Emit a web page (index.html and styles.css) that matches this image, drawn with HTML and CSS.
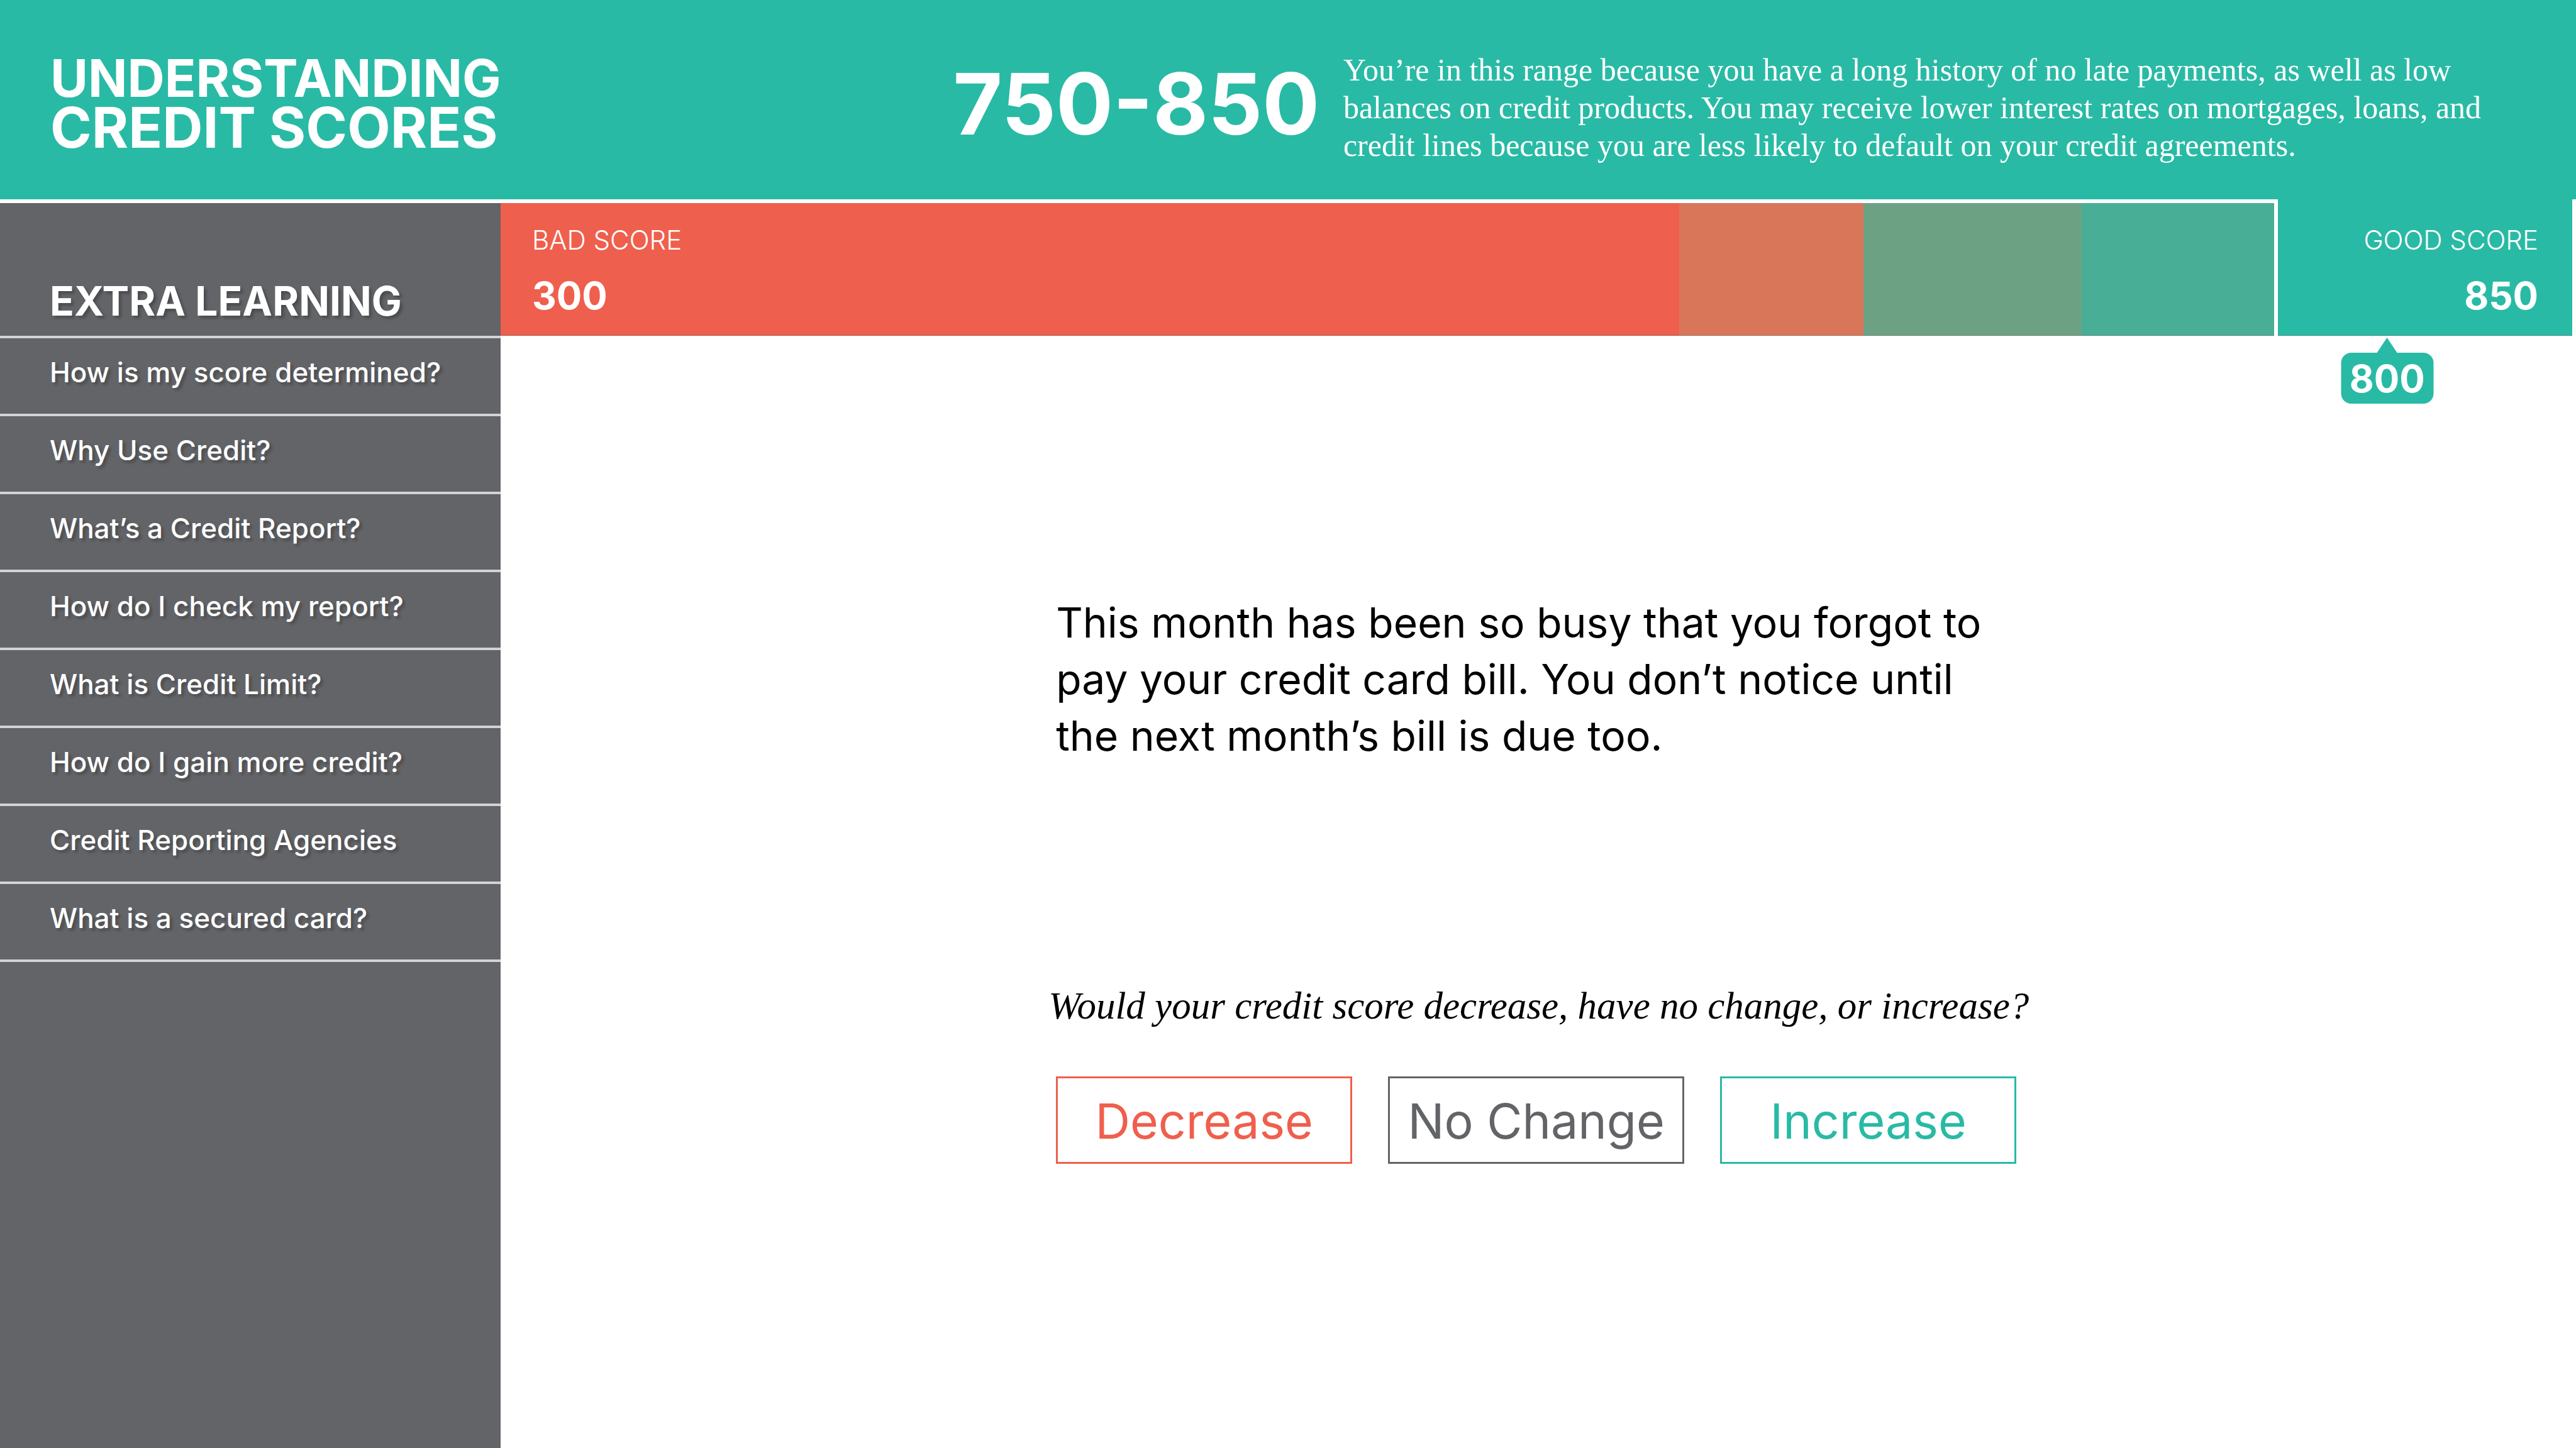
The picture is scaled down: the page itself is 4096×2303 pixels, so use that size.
FILE: index.html
```html
<!DOCTYPE html>
<html lang="en">
<head>
<meta charset="utf-8">
<title>Understanding Credit Scores</title>
<link rel="stylesheet" href="styles.css">
</head>
<body>
<header class="header">
  <h1 class="title"><span class="title-top">UNDERSTANDING</span><span class="title-bottom">CREDIT SCORES</span></h1>
  <strong class="range">750-850</strong>
  <p class="summary">You’re in this range because you have a long history of no late payments, as well as low balances on credit products. You may receive lower interest rates on mortgages, loans, and credit lines because you are less likely to default on your credit agreements.</p>
</header>
<div class="page">
  <aside class="sidebar">
    <h2 class="sidebar-title">EXTRA LEARNING</h2>
    <nav class="topics">
      <a class="topic" href="#determined">How is my score determined?</a>
      <a class="topic" href="#why">Why Use Credit?</a>
      <a class="topic" href="#report">What’s a Credit Report?</a>
      <a class="topic" href="#check">How do I check my report?</a>
      <a class="topic" href="#limit">What is Credit Limit?</a>
      <a class="topic" href="#gain">How do I gain more credit?</a>
      <a class="topic" href="#agencies">Credit Reporting Agencies</a>
      <a class="topic" href="#secured">What is a secured card?</a>
    </nav>
  </aside>
  <main class="main">
    <section class="scale">
      <div class="band band-bad">
        <span class="band-label">BAD SCORE</span>
        <span class="band-value">300</span>
      </div>
      <div class="band band-poor"></div>
      <div class="band band-fair"></div>
      <div class="band band-better"></div>
      <div class="band band-good">
        <span class="band-label">GOOD SCORE</span>
        <span class="band-value">850</span>
      </div>
      <output class="marker" style="left: 90.9%">800</output>
    </section>
    <section class="question">
      <p class="scenario">This month has been so busy that you forgot to pay your credit card bill. You don’t notice until the next month’s bill is due too.</p>
      <p class="prompt">Would your credit score decrease, have no change, or increase?</p>
      <div class="answers">
        <button class="answer answer-decrease" type="button">Decrease</button>
        <button class="answer answer-same" type="button">No Change</button>
        <button class="answer answer-increase" type="button">Increase</button>
      </div>
    </section>
  </main>
</div>
</body>
</html>
```
FILE: styles.css
```css
:root {
  --teal: #29baa5;
  --red: #ef5f4d;
  --gray: #636468;
  --rule: #d1d3d4;
}

* {
  box-sizing: border-box;
}

body {
  display: flex;
  flex-direction: column;
  min-height: 100vh;
  margin: 0;
  background: #fff;
  color: #000;
  font-family: Inter, "Liberation Sans", sans-serif;
}

h1,
h2,
p {
  margin: 0;
}

/* Header */
.header {
  display: grid;
  grid-template-columns: 37% 15% 1fr;
  align-items: start;
  padding: 80px 0 56px;
  background: var(--teal);
  color: #fff;
}

.title {
  display: flex;
  flex-direction: column;
  padding: 7px 0 0 80px;
  font-weight: 700;
}

.title-top {
  font-size: 82px;
  line-height: 76px;
}

.title-bottom {
  font-size: 89px;
  line-height: 80px;
}

.range {
  padding-top: 18px;
  font-size: 135px;
  font-weight: 700;
  line-height: 134px;
}

.summary {
  max-width: 1840px;
  padding: 1px 0 0 6px;
  font: 50px/60px "Liberation Serif", serif;
}

.page {
  display: grid;
  flex: 1;
  grid-template-columns: 199fr 825fr;
}

/* Sidebar */
.sidebar {
  border-top: 6px solid #fff;
  background: var(--gray);
  color: #fff;
  text-shadow: 4px 4px 4px rgba(0, 0, 0, 0.25);
}

.sidebar-title {
  padding: 125px 0 24px 79px;
  border-bottom: 4px solid var(--rule);
  font-size: 64px;
  font-weight: 700;
  line-height: 62px;
}

.topics {
  display: flex;
  flex-direction: column;
}

.topic {
  padding: 32px 0 44px 79px;
  border-bottom: 4px solid var(--rule);
  color: inherit;
  font-size: 44px;
  font-weight: 500;
  line-height: 44px;
  text-decoration: none;
}

/* Score scale */
.scale {
  position: relative;
  display: grid;
  grid-template-columns: 1874fr 293fr 347fr 306fr 480fr;
  color: #fff;
}

.band {
  display: flex;
  flex-direction: column;
  gap: 37px;
  padding: 38px 50px 34px;
  border-top: 6px solid #fff;
  box-shadow: inset 0 -1px rgba(90, 90, 90, 0.5);
}

.band-bad {
  background: var(--red);
}

.band-poor {
  background: #d9765a;
}

.band-fair {
  background: #6ca283;
}

.band-better {
  background: #48ae95;
}

.band-good {
  align-items: flex-end;
  padding: 44px 54px 34px;
  border: solid #fff;
  border-width: 0 6px;
  background: var(--teal);
}

.band-label {
  font-size: 42px;
  font-weight: 300;
  line-height: 42px;
}

.band-value {
  font-size: 60px;
  font-weight: 700;
  line-height: 60px;
}

.marker {
  position: absolute;
  top: calc(100% + 27px);
  min-width: 147px;
  padding: 11px 0 10px;
  border-radius: 16px;
  background: var(--teal);
  font-size: 60px;
  font-weight: 700;
  line-height: 60px;
  text-align: center;
  transform: translateX(-50%);
}

.marker::before {
  position: absolute;
  bottom: 100%;
  left: 50%;
  border: solid transparent;
  border-width: 0 16px 24px;
  border-bottom-color: var(--teal);
  content: "";
  transform: translateX(-50%);
}

/* Question */
.question {
  padding: 411px 0 0 26.4%;
}

.scenario {
  max-width: 1550px;
  padding-left: 12px;
  font-size: 66px;
  line-height: 90px;
}

.prompt {
  margin-top: 355px;
  font: italic 61px/60px "Liberation Serif", serif;
}

.answers {
  display: flex;
  gap: 57px;
  margin-top: 82px;
  padding-left: 12px;
}

.answer {
  width: 471px;
  padding: 22px 0 18px;
  border: 3px solid;
  background: #fff;
  font: 400 77px/93px Inter, "Liberation Sans", sans-serif;
}

.answer-decrease {
  color: var(--red);
}

.answer-same {
  color: var(--gray);
}

.answer-increase {
  color: var(--teal);
}
```
